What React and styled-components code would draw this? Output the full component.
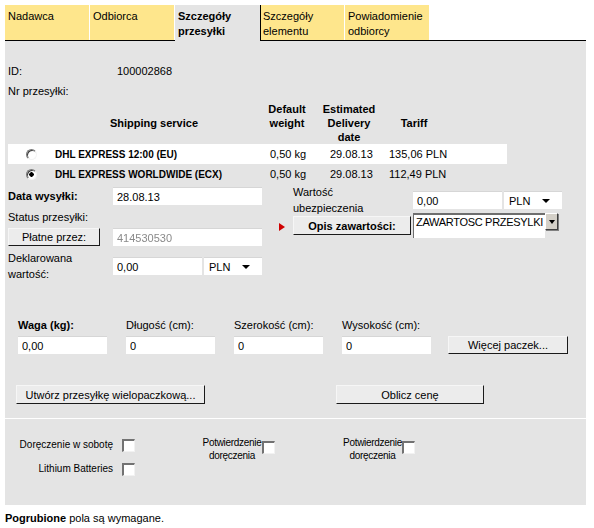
import React from "react";
import styled, { createGlobalStyle } from "styled-components";

const GlobalStyle = createGlobalStyle`
  body {
    margin: 0;
    background: #fff;
    font-family: "Liberation Sans", Arial, sans-serif;
    font-size: 11px;
    color: #000;
  }
`;

const Page = styled.div`
  width: 581px;
  padding: 5px 0 0 5px;
`;

const TabBar = styled.div`
  display: flex;
  align-items: flex-start;
  height: 35px;
  border-bottom: 1px solid #000;
`;

const Tab = styled.div`
  box-sizing: border-box;
  width: ${(p) => (p.$active ? 85 : 84)}px;
  height: ${(p) => (p.$active ? 36 : 35)}px;
  margin-right: ${(p) => (p.$active ? 0 : 1)}px;
  margin-bottom: ${(p) => (p.$active ? -1 : 0)}px;
  padding: 4px 0 0 ${(p) => (p.$edge ? 2 : 3)}px;
  line-height: 15px;
  background: ${(p) => (p.$active ? "#e4e4e4" : "#fee68c")};
  font-weight: ${(p) => (p.$active ? "bold" : "normal")};
  border-left: ${(p) => (p.$edge ? "1px solid #000" : "none")};
`;

const Panel = styled.div`
  box-sizing: border-box;
  height: 464px;
  background: #e4e4e4;
  padding-top: 23px;
`;

const InfoGrid = styled.div`
  display: grid;
  grid-template-columns: 109px auto;
  row-gap: 6px;
  line-height: 14px;
  padding-left: 3px;
`;

const ServiceTable = styled.div`
  margin: 4px 0 0 3px;
  width: 499px;
`;

const ServiceRow = styled.div`
  display: grid;
  grid-template-columns: 37px 218px 48px 76px 54px 66px;
  height: ${(p) => (p.$head ? 42 : 20)}px;
  align-items: center;
  background: ${(p) => (p.$light ? "#fff" : "transparent")};
`;

const HeadCell = styled.div`
  font-weight: bold;
  text-align: center;
  line-height: 14px;
  align-self: ${(p) => (p.$top ? "start" : "center")};
`;

const Cell = styled.div`
  padding-left: ${(p) => p.$pad || 0}px;
  font-weight: ${(p) => (p.$bold ? "bold" : "normal")};
  font-size: ${(p) => (p.$bold ? 10 : 11)}px;
  white-space: nowrap;
`;

const Radio = styled.span`
  display: block;
  box-sizing: border-box;
  width: 11px;
  height: 11px;
  margin-left: 18px;
  border-radius: 50%;
  border: 1px solid;
  border-color: #7a7a7a #f4f4f4 #f4f4f4 #7a7a7a;
  background: ${(p) =>
    p.$checked
      ? "radial-gradient(circle, #000 0 2px, #fff 2.5px)"
      : "#fff"};
  box-shadow: inset 1px 1px 0 #404040;
`;

const FormArea = styled.div`
  display: flex;
  align-items: flex-start;
  padding-left: 3px;
`;

const LeftForm = styled.div`
  display: grid;
  grid-template-columns: 105px 149px;
  grid-template-rows: 18px 15px 18px 32px;
  row-gap: 4px;
  align-items: center;
  margin-top: 3px;
`;

const RightForm = styled.div`
  display: grid;
  grid-template-columns: 14px 120px 149px;
  grid-template-rows: 32px 22px;
  align-items: center;
  margin: 0 0 0 17px;
`;

const Label = styled.div`
  font-weight: ${(p) => (p.$bold ? "bold" : "normal")};
  line-height: ${(p) => (p.$tall ? 16 : 14)}px;
`;

const Input = styled.input`
  box-sizing: border-box;
  width: ${(p) => p.$w || 149}px;
  height: 18px;
  margin: 0;
  padding: 0 0 0 4px;
  border: none;
  border-top: 1px solid #d6d6d6;
  background: #fff;
  font-family: inherit;
  font-size: 11px;
  color: ${(p) => (p.$faded ? "#8a8a8a" : "#000")};
  filter: ${(p) => (p.$faded ? "blur(0.4px)" : "none")};
  outline: none;
`;

const FieldPair = styled.div`
  display: flex;
  gap: 2px;
`;

const Select = styled.div`
  box-sizing: border-box;
  display: flex;
  align-items: center;
  justify-content: space-between;
  width: 58px;
  height: 18px;
  padding: 0 12px 0 5px;
  background: #fff;
  border-top: 1px solid #d6d6d6;
`;

const Caret = styled.span`
  width: 0;
  height: 0;
  border-left: 4px solid transparent;
  border-right: 4px solid transparent;
  border-top: 4px solid #000;
`;

const Button = styled.button`
  box-sizing: border-box;
  width: ${(p) => p.$w}px;
  height: ${(p) => p.$h || 18}px;
  margin: 0;
  padding: 0;
  background: #ececec;
  border: 1px solid;
  border-color: #f6f6f6 #1a1a1a #1a1a1a #f6f6f6;
  font-family: inherit;
  font-size: 11px;
  font-weight: ${(p) => (p.$bold ? "bold" : "normal")};
  color: #000;
  align-self: ${(p) => (p.$top ? "start" : "auto")};
`;

const Marker = styled.span`
  justify-self: start;
  width: 0;
  height: 0;
  border-left: 6px solid #d00000;
  border-top: 4px solid transparent;
  border-bottom: 4px solid transparent;
`;

const Combo = styled.div`
  display: flex;
  align-items: flex-start;
  align-self: start;
  margin-top: -3px;
`;

const ComboText = styled.div`
  box-sizing: border-box;
  width: 132px;
  height: 25px;
  padding: 1px 0 0 2px;
  background: #fff;
  border-top: 2px solid #6e6e6e;
  border-left: 1px solid #6e6e6e;
  white-space: nowrap;
  overflow: hidden;
  font-size: 11px;
  letter-spacing: -0.3px;
`;

const ComboButton = styled.div`
  box-sizing: border-box;
  display: flex;
  align-items: center;
  justify-content: center;
  width: 13px;
  height: 17px;
  background: #d4d0c8;
  border: 1px solid;
  border-color: #fff #404040 #404040 #fff;
  box-shadow: 1px 1px 0 #808080;
`;

const SmallCaret = styled(Caret)`
  border-left-width: 3.5px;
  border-right-width: 3.5px;
`;

const DimsGrid = styled.div`
  display: grid;
  grid-template-columns: 108px 108px 108px 106px 120px;
  grid-template-rows: 14px 18px;
  row-gap: 4px;
  align-items: center;
  margin-top: 36px;
  padding-left: 13px;
`;

const ActionRow = styled.div`
  display: flex;
  gap: 131px;
  margin-top: 31px;
  padding-left: 11px;
`;

const Divider = styled.div`
  height: 1px;
  margin-top: 14px;
  background: #fff;
`;

const Options = styled.div`
  display: flex;
  align-items: flex-start;
  padding-top: 17px;
  font-size: 10px;
`;

const OptionStack = styled.div`
  display: grid;
  grid-template-columns: 108px 13px;
  grid-auto-rows: 14px;
  column-gap: 9px;
  row-gap: 10px;
  align-items: center;
  padding-top: 2px;
`;

const OptionLabel = styled.div`
  text-align: right;
  line-height: 14px;
  white-space: nowrap;
`;

const Confirm = styled.div`
  display: flex;
  align-items: flex-start;
  margin-left: ${(p) => p.$gap}px;
`;

const ConfirmLabel = styled.div`
  width: ${(p) => p.$w}px;
  text-align: center;
  line-height: 13px;
  white-space: nowrap;
  letter-spacing: -0.3px;
`;

const Check = styled.span`
  display: block;
  box-sizing: border-box;
  width: 13px;
  height: 13px;
  margin-top: ${(p) => p.$top || 0}px;
  background: #fff;
  border-style: solid;
  border-width: 2px 1px 1px 2px;
  border-color: #727272 #f2f2f2 #f2f2f2 #727272;
`;

const Footnote = styled.p`
  margin: 6px 0 0;
  line-height: 14px;
`;

const services = [
  { name: "DHL EXPRESS 12:00 (EU)", weight: "0,50 kg", date: "29.08.13", tariff: "135,06 PLN" },
  { name: "DHL EXPRESS WORLDWIDE (ECX)", weight: "0,50 kg", date: "29.08.13", tariff: "112,49 PLN", checked: true },
];

export default function App() {
  return (
    <Page>
      <GlobalStyle />
      <TabBar>
        <Tab>Nadawca</Tab>
        <Tab>Odbiorca</Tab>
        <Tab $active>Szczegóły<br />przesyłki</Tab>
        <Tab $edge>Szczegóły<br />elementu</Tab>
        <Tab>Powiadomienie<br />odbiorcy</Tab>
      </TabBar>
      <Panel>
        <InfoGrid>
          <div>ID:</div>
          <div>100002868</div>
          <div>Nr przesyłki:</div>
          <div />
        </InfoGrid>

        <ServiceTable>
          <ServiceRow $head>
            <div />
            <HeadCell>Shipping service</HeadCell>
            <HeadCell $top>Default<br />weight</HeadCell>
            <HeadCell $top>Estimated<br />Delivery<br />date</HeadCell>
            <HeadCell>Tariff</HeadCell>
          </ServiceRow>
          {services.map((s, i) => (
            <ServiceRow key={s.name} $light={i === 0}>
              <Radio $checked={s.checked} />
              <Cell $bold $pad={10}>{s.name}</Cell>
              <Cell $pad={7}>{s.weight}</Cell>
              <Cell $pad={19}>{s.date}</Cell>
              <Cell $pad={2}>{s.tariff}</Cell>
            </ServiceRow>
          ))}
        </ServiceTable>

        <FormArea>
          <LeftForm>
            <Label $bold>Data wysyłki:</Label>
            <Input readOnly value="28.08.13" />
            <Label>Status przesyłki:</Label>
            <div />
            <Button $w={92} $h={18}>Płatne przez:</Button>
            <Input readOnly value="414530530" $faded />
            <Label $tall>Deklarowana<br />wartość:</Label>
            <FieldPair>
              <Input readOnly value="0,00" $w={89} />
              <Select>PLN<Caret /></Select>
            </FieldPair>
          </LeftForm>

          <RightForm>
            <div />
            <Label $tall>Wartość<br />ubezpieczenia</Label>
            <FieldPair>
              <Input readOnly value="0,00" $w={89} />
              <Select>PLN<Caret /></Select>
            </FieldPair>
            <Marker />
            <Button $w={118} $h={19} $bold $top>Opis zawartości:</Button>
            <Combo>
              <ComboText>ZAWARTOSC PRZESYLKI</ComboText>
              <ComboButton><SmallCaret /></ComboButton>
            </Combo>
          </RightForm>
        </FormArea>

        <DimsGrid>
          <Label $bold>Waga (kg):</Label>
          <Label>Długość (cm):</Label>
          <Label>Szerokość (cm):</Label>
          <Label>Wysokość (cm):</Label>
          <div />
          <Input readOnly value="0,00" $w={89} />
          <Input readOnly value="0" $w={89} />
          <Input readOnly value="0" $w={89} />
          <Input readOnly value="0" $w={89} />
          <Button $w={120}>Więcej paczek...</Button>
        </DimsGrid>

        <ActionRow>
          <Button $w={189} $h={19}>Utwórz przesyłkę wielopaczkową...</Button>
          <Button $w={148} $h={19}>Oblicz cenę</Button>
        </ActionRow>

        <Divider />

        <Options>
          <OptionStack>
            <OptionLabel>Doręczenie w sobotę</OptionLabel>
            <Check />
            <OptionLabel>Lithium Batteries</OptionLabel>
            <Check />
          </OptionStack>
          <Confirm $gap={67}>
            <ConfirmLabel $w={60}>Potwierdzenie<br />doręczenia</ConfirmLabel>
            <Check $top={5} />
          </Confirm>
          <Confirm $gap={68}>
            <ConfirmLabel $w={59}>Potwierdzenie<br />doręczenia</ConfirmLabel>
            <Check $top={5} />
          </Confirm>
        </Options>
      </Panel>
      <Footnote><b>Pogrubione</b> pola są wymagane.</Footnote>
    </Page>
  );
}
